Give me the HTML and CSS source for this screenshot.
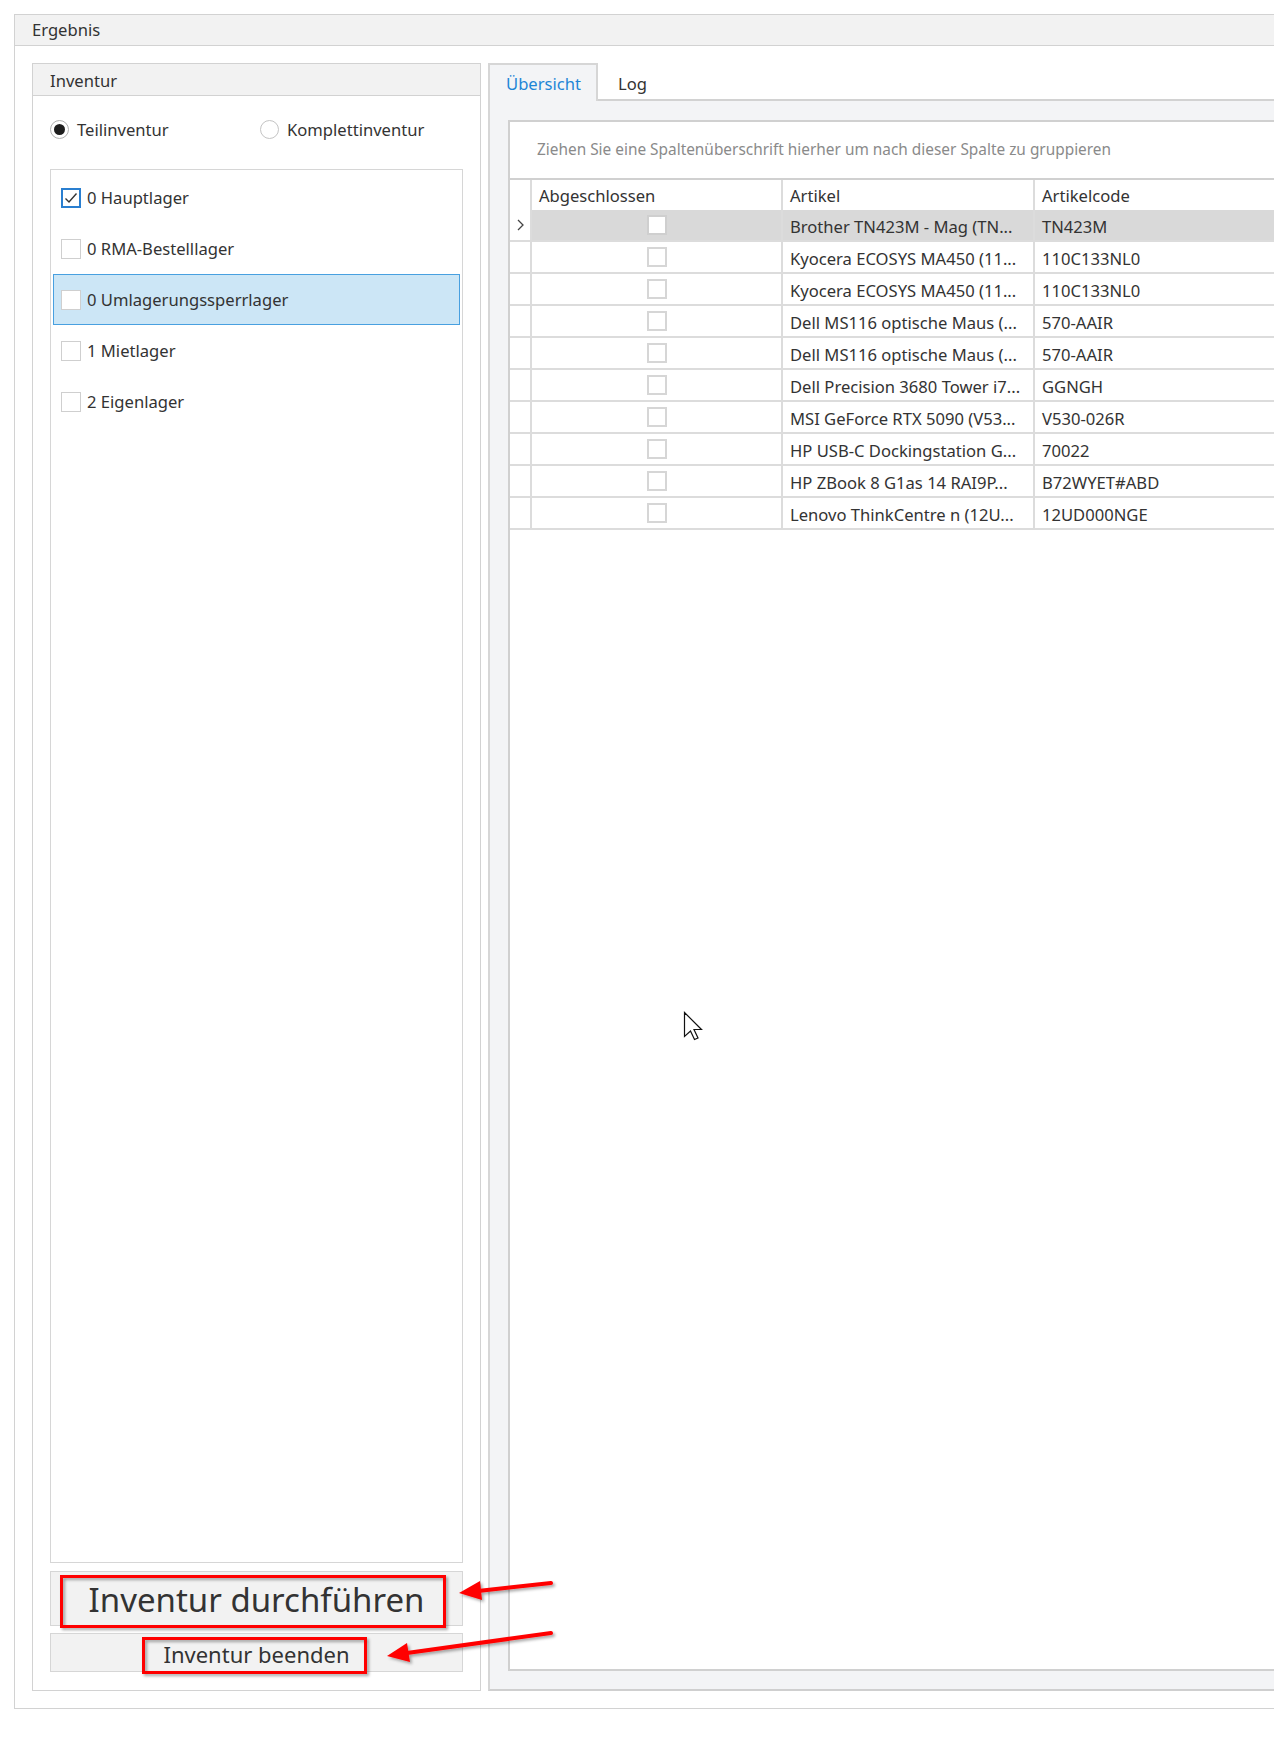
FILE: index.html
```html
<!DOCTYPE html>
<html lang="de">
<head>
    <meta charset="UTF-8">
    <meta name="viewport" content="width=device-width, initial-scale=1.0">
    <title>Ergebnis - Inventur</title>
    <link rel="stylesheet" href="styles.css">
</head>
<body>
    <div class="result">
        <div class="result-head">Ergebnis</div>
        <div class="result-body">

            <!-- Left: inventory options -->
            <section class="inventur">
                <div class="group-head">Inventur</div>
                <div class="mode">
                    <label class="radio-opt first"><span class="radio checked"></span>Teilinventur</label>
                    <label class="radio-opt"><span class="radio"></span>Komplettinventur</label>
                </div>
                <div class="lager-list">
                    <div class="lager-row">
                        <span class="check checked">
                            <svg width="14" height="12" viewBox="0 0 14 12"><path d="M1.5 6.5 L5 10 L12.5 1.5" fill="none" stroke="#333" stroke-width="1.4"/></svg>
                        </span>0 Hauptlager
                    </div>
                    <div class="lager-row"><span class="check"></span>0 RMA-Bestelllager</div>
                    <div class="lager-row selected"><span class="check"></span>0 Umlagerungssperrlager</div>
                    <div class="lager-row"><span class="check"></span>1 Mietlager</div>
                    <div class="lager-row"><span class="check"></span>2 Eigenlager</div>
                </div>
                <div class="actions">
                    <button class="btn btn-big">Inventur durchführen</button>
                    <button class="btn btn-small">Inventur beenden</button>
                </div>
            </section>

            <!-- Right: tabs with result grid -->
            <section class="tabs">
                <div class="tab-strip">
                    <div class="tab active">Übersicht</div>
                    <div class="tab">Log</div>
                </div>
                <div class="tab-body">
                    <div class="grid">
                        <div class="group-panel">Ziehen Sie eine Spaltenüberschrift hierher um nach dieser Spalte zu gruppieren</div>
                        <div class="grid-row grid-header">
                            <div class="cell ind"></div>
                            <div class="cell">Abgeschlossen</div>
                            <div class="cell">Artikel</div>
                            <div class="cell">Artikelcode</div>
                            <div class="cell rest"></div>
                        </div>
                        <div class="grid-row focused">
                            <div class="cell ind">
                                <svg width="7" height="12" viewBox="0 0 7 12"><path d="M1 1 L6 6 L1 11" fill="none" stroke="#444" stroke-width="1.3"/></svg>
                            </div>
                            <div class="cell center"><span class="box"></span></div>
                            <div class="cell">Brother TN423M - Mag (TN...</div>
                            <div class="cell">TN423M</div>
                            <div class="cell rest"></div>
                        </div>
                        <div class="grid-row">
                            <div class="cell ind"></div>
                            <div class="cell center"><span class="box"></span></div>
                            <div class="cell">Kyocera ECOSYS MA450 (11...</div>
                            <div class="cell">110C133NL0</div>
                            <div class="cell rest"></div>
                        </div>
                        <div class="grid-row">
                            <div class="cell ind"></div>
                            <div class="cell center"><span class="box"></span></div>
                            <div class="cell">Kyocera ECOSYS MA450 (11...</div>
                            <div class="cell">110C133NL0</div>
                            <div class="cell rest"></div>
                        </div>
                        <div class="grid-row">
                            <div class="cell ind"></div>
                            <div class="cell center"><span class="box"></span></div>
                            <div class="cell">Dell MS116 optische Maus (...</div>
                            <div class="cell">570-AAIR</div>
                            <div class="cell rest"></div>
                        </div>
                        <div class="grid-row">
                            <div class="cell ind"></div>
                            <div class="cell center"><span class="box"></span></div>
                            <div class="cell">Dell MS116 optische Maus (...</div>
                            <div class="cell">570-AAIR</div>
                            <div class="cell rest"></div>
                        </div>
                        <div class="grid-row">
                            <div class="cell ind"></div>
                            <div class="cell center"><span class="box"></span></div>
                            <div class="cell">Dell Precision 3680 Tower i7...</div>
                            <div class="cell">GGNGH</div>
                            <div class="cell rest"></div>
                        </div>
                        <div class="grid-row">
                            <div class="cell ind"></div>
                            <div class="cell center"><span class="box"></span></div>
                            <div class="cell">MSI GeForce RTX 5090 (V53...</div>
                            <div class="cell">V530-026R</div>
                            <div class="cell rest"></div>
                        </div>
                        <div class="grid-row">
                            <div class="cell ind"></div>
                            <div class="cell center"><span class="box"></span></div>
                            <div class="cell">HP USB-C Dockingstation G...</div>
                            <div class="cell">70022</div>
                            <div class="cell rest"></div>
                        </div>
                        <div class="grid-row">
                            <div class="cell ind"></div>
                            <div class="cell center"><span class="box"></span></div>
                            <div class="cell">HP ZBook 8 G1as 14 RAI9P...</div>
                            <div class="cell">B72WYET#ABD</div>
                            <div class="cell rest"></div>
                        </div>
                        <div class="grid-row">
                            <div class="cell ind"></div>
                            <div class="cell center"><span class="box"></span></div>
                            <div class="cell">Lenovo ThinkCentre n (12U...</div>
                            <div class="cell">12UD000NGE</div>
                            <div class="cell rest"></div>
                        </div>
                    </div>
                </div>
            </section>
        </div>
    </div>

    <!-- Annotations drawn on top of the screenshot: red boxes, arrows, mouse pointer -->
    <svg class="annotations" width="1274" height="1737" viewBox="0 0 1274 1737">
        <defs>
            <filter id="shadow" x="-20%" y="-50%" width="140%" height="200%">
                <feDropShadow dx="2" dy="2" stdDeviation="1.5" flood-color="#000" flood-opacity="0.35"/>
            </filter>
        </defs>
        <g filter="url(#shadow)" fill="none" stroke="#ff0000" stroke-width="3">
            <rect x="61.5" y="1576.5" width="383" height="50"/>
            <rect x="143.5" y="1638.5" width="222" height="34"/>
        </g>
        <g filter="url(#shadow)">
            <line x1="551" y1="1583" x2="478" y2="1591" stroke="#ff0000" stroke-width="4" stroke-linecap="round"/>
            <polygon points="459,1593 482,1600 480,1581" fill="#ff0000"/>
            <line x1="551" y1="1633" x2="407" y2="1653" stroke="#ff0000" stroke-width="4" stroke-linecap="round"/>
            <polygon points="387,1656 410,1662 407,1643" fill="#ff0000"/>
        </g>
        <path transform="translate(684.5 1012.5)" d="M0 0 V24 L6 18.5 L10 27 L13.5 25.5 L9.5 17 H17 Z" fill="#fff" stroke="#111" stroke-width="1.2" stroke-linejoin="miter"/>
    </svg>
</body>
</html>
```

FILE: styles.css
```css
body {
    margin: 0;
    padding: 0;
    background: #fff;
    color: #333;
    font-family: "Noto Sans", "Open Sans", sans-serif;
    font-size: 16.6px;
    overflow: hidden;
    position: relative;
}
.result {
    box-sizing: border-box;
    margin: 14px 0 0 14px;
    width: 1320px;
    height: 1695px;
    border: 1px solid #d2d2d2;
    display: flex;
    flex-direction: column;
}
.result-head {
    height: 30px;
    line-height: 30px;
    padding-left: 17px;
    background: #f2f2f2;
    border-bottom: 1px solid #d2d2d2;
}
.result-body {
    flex: 1;
    display: flex;
    gap: 7px;
    padding: 17px 0 17px 17px;
    min-height: 0;
}

/* ---- left group box ---- */
.inventur {
    box-sizing: border-box;
    width: 449px;
    border: 1px solid #d2d2d2;
    display: flex;
    flex-direction: column;
}
.group-head {
    height: 31px;
    line-height: 33px;
    padding-left: 17px;
    background: #f2f2f2;
    border-bottom: 1px solid #d2d2d2;
}
.mode {
    display: flex;
    align-items: center;
    padding: 24px 0 0 17px;
    height: 19px;
    margin-bottom: 30px;
}
.radio-opt {
    display: flex;
    align-items: center;
    gap: 8px;
}
.radio-opt.first {
    width: 210px;
}
.radio {
    box-sizing: border-box;
    width: 19px;
    height: 19px;
    border: 1px solid #c4c4c4;
    border-radius: 50%;
    background: #fff;
    display: flex;
    align-items: center;
    justify-content: center;
}
.radio.checked {
    border-color: #b0b0b0;
}
.radio.checked::after {
    content: "";
    width: 11px;
    height: 11px;
    border-radius: 50%;
    background: #1e1e1e;
}
.lager-list {
    flex: 1;
    margin: 0 17px;
    padding: 2px;
    border: 1px solid #d6d6d6;
}
.lager-row {
    box-sizing: border-box;
    height: 51px;
    display: flex;
    align-items: center;
    padding-left: 7px;
    border: 1px solid transparent;
}
.lager-row.selected {
    background: #cce6f6;
    border-color: #48a0e0;
}
.check {
    box-sizing: border-box;
    width: 20px;
    height: 20px;
    margin-right: 6px;
    border: 1px solid #cfcfcf;
    background: #fff;
    display: flex;
    align-items: center;
    justify-content: center;
}
.check.checked {
    border: 2px solid #2a7fd0;
}
.actions {
    display: flex;
    flex-direction: column;
    gap: 7px;
    margin: 8px 17px 0;
    padding-bottom: 18px;
}
.btn {
    box-sizing: border-box;
    margin: 0;
    padding: 3px 0 0;
    border: 1px solid #d6d6d6;
    background: #f2f2f2;
    color: #333;
    font-family: "Noto Sans", "Open Sans", sans-serif;
    text-align: center;
}
.btn-big {
    height: 55px;
    font-size: 33px;
    line-height: 48px;
}
.btn-small {
    height: 39px;
    font-size: 22px;
    line-height: 33px;
}

/* ---- right tab control ---- */
.tabs {
    flex: 1;
    display: flex;
    flex-direction: column;
    min-width: 0;
}
.tab-strip {
    box-sizing: border-box;
    height: 38px;
    display: flex;
    align-items: flex-end;
    border-bottom: 2px solid #d2d2d2;
}
.tab {
    box-sizing: border-box;
    height: 38px;
    line-height: 42px;
    padding: 0 20px;
    margin-bottom: -2px;
}
.tab.active {
    padding: 0 15px 0 16px;
    background: #f3f4f6;
    color: #1f86d6;
    border: 2px solid #d6d6d6;
    border-bottom: none;
    line-height: 38px;
}
.tab-body {
    flex: 1;
    background: #f3f4f6;
    border-left: 2px solid #d6d6d6;
    border-bottom: 2px solid #cfcfcf;
    padding: 19px 0 18px 18px;
    display: flex;
    min-height: 0;
}
.grid {
    flex: 1;
    background: #fff;
    border-top: 2px solid #d0d0d0;
    border-left: 2px solid #d0d0d0;
    border-bottom: 2px solid #d0d0d0;
}
.group-panel {
    height: 56px;
    line-height: 56px;
    padding-left: 27px;
    color: #8a8a8a;
    font-size: 15.4px;
}
.grid-row {
    box-sizing: border-box;
    display: grid;
    grid-template-columns: 22px 251px 252px 252px 1fr;
    height: 32px;
    border-bottom: 2px solid #dcdcdc;
}
.grid-header {
    border-top: 2px solid #d0d0d0;
    border-bottom: none;
}
.cell {
    box-sizing: border-box;
    border-right: 2px solid #dcdcdc;
    padding-left: 7px;
    padding-top: 3px;
    display: flex;
    align-items: center;
    white-space: nowrap;
    overflow: hidden;
}
.grid-header .cell {
    padding-top: 1px;
}
.cell.ind {
    padding-left: 0;
    padding-top: 0;
    justify-content: center;
}
.cell.center {
    padding-left: 0;
    padding-top: 0;
    justify-content: center;
}
.cell.rest {
    border-right: none;
}
.focused .cell {
    background: #d9d9d9;
}
.focused .cell.ind {
    background: #fff;
}
.box {
    box-sizing: border-box;
    width: 20px;
    height: 20px;
    border: 2px solid #d6d6d6;
    background: #fff;
}
.focused .box {
    border-color: #cfcfcf;
}

/* overlay with the annotation marks */
.annotations {
    position: absolute;
    top: 0;
    left: 0;
    pointer-events: none;
}
```
